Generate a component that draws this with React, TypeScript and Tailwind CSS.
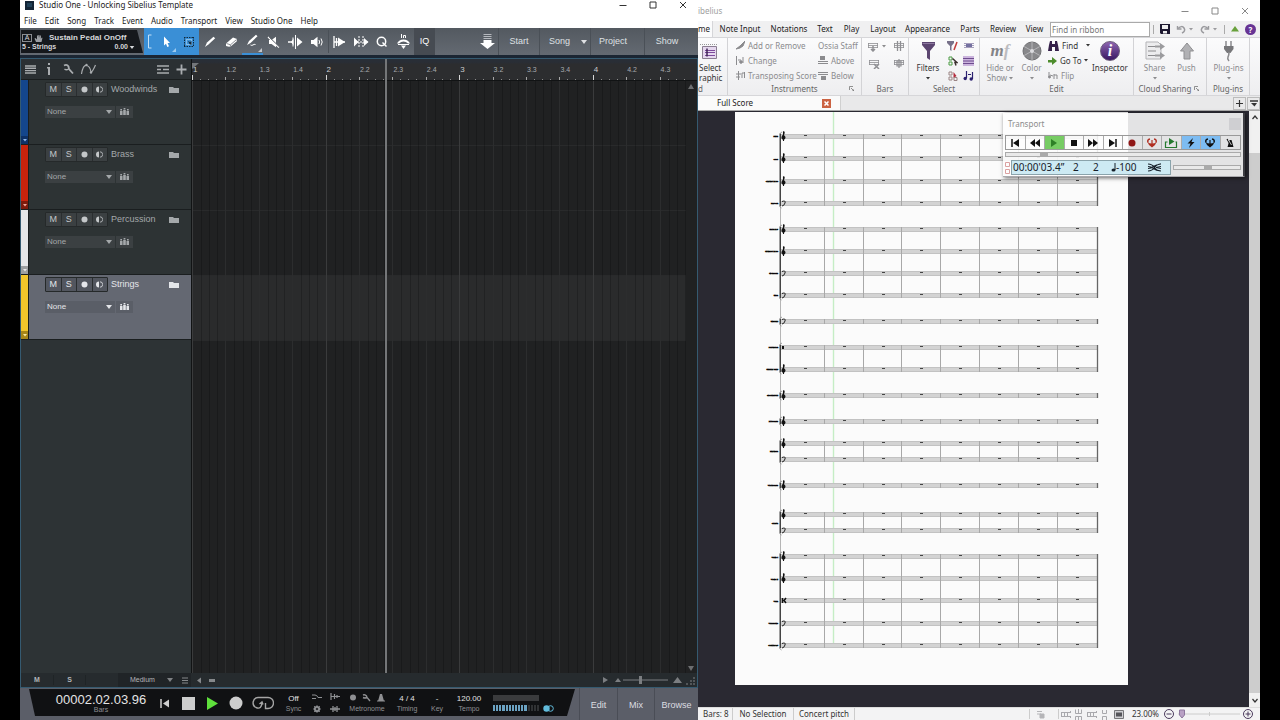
import React from "react";

type IcoProps = { w: number; h: number; className?: string; children: React.ReactNode };

function Ico({ w, h, className = "", children }: IcoProps) {
  return (
    <svg
      width={w}
      height={h}
      viewBox={`0 0 ${w} ${h}`}
      fill="none"
      stroke="currentColor"
      aria-hidden="true"
      className={`shrink-0 ${className}`}
    >
      {children}
    </svg>
  );
}

function Down({ className = "" }: { className?: string }) {
  return (
    <Ico w={6} h={4} className={className}>
      <path d="M0 0h6L3 4z" fill="currentColor" stroke="none" />
    </Ico>
  );
}

function TinyDown({ className = "" }: { className?: string }) {
  return (
    <Ico w={4} h={3} className={className}>
      <path d="M0 0h4L2 2.5z" fill="currentColor" stroke="none" />
    </Ico>
  );
}

function WindowButtons({ className = "" }: { className?: string }) {
  return (
    <div className={`flex items-center ${className}`}>
      <button aria-label="Minimize" className="flex h-3 w-[30px] items-center justify-center">
        <Ico w={8} h={8}><path d="M0.5 4.5h7" /></Ico>
      </button>
      <button aria-label="Maximize" className="flex h-3 w-[30px] items-center justify-center">
        <Ico w={8} h={8}><path d="M1 1h6v6H1z" /></Ico>
      </button>
      <button aria-label="Close" className="flex h-3 w-[30px] items-center justify-center">
        <Ico w={8} h={8}><path d="M1 1l6 6M7 1L1 7" /></Ico>
      </button>
    </div>
  );
}

/* ---------------------------------------------------------------- DAW --- */

const dawMenu = ["File", "Edit", "Song", "Track", "Event", "Audio", "Transport", "View", "Studio One", "Help"];

function Tool({ label, className = "", children }: { label: string; className?: string; children: React.ReactNode }) {
  return (
    <button aria-label={label} className={`relative flex h-full shrink-0 items-center justify-center ${className}`}>
      {children}
    </button>
  );
}

function DawToolbar() {
  return (
    <div className="flex h-[27px] shrink-0 bg-linear-to-b from-[#535960] to-[#646a72] text-white">
      <div className="relative w-[124px] shrink-0">
        <svg viewBox="0 0 124 27" preserveAspectRatio="none" className="absolute inset-0 h-full w-full" aria-hidden="true">
          <path d="M1 2h116l6 23H1z" fill="#15181c" />
        </svg>
        <div className="relative flex h-full flex-col justify-center pt-[2px] pr-[8px] pl-[2px] font-bold text-[#d5d7da]">
          <div className="flex h-[10px] items-center text-[9px]">
            <span className="flex h-[8px] w-[10px] items-center justify-center border border-[#8a8d92] text-[7px] font-normal">A</span>
            <Ico w={9} h={9} className="ml-[2px] text-[#9c9fa4]">
              <path d="M2 8L0.5 4.5l1-.4L3 5.5V1.5h1V4l.4-3h1v3l.5-2.500h1V5l.6-1.200h1L7.500 8z" fill="currentColor" stroke="none" />
            </Ico>
            <span className="ml-[6px] whitespace-nowrap text-[8px]">Sustain Pedal OnOff</span>
          </div>
          <div className="flex h-[9px] items-center justify-between pr-[1px] text-[7px]">
            <span>5 - Strings</span>
            <span className="flex items-center gap-[1px]">0.00 <Down className="h-[3px] w-[6px]" /></span>
          </div>
        </div>
      </div>
      <div className="flex h-[27px] shrink-0 bg-[#3a8fd6]">
        <Tool label="Bracket" className="w-[12px]"><Ico w={4} h={15}><path d="M3.500 1H.5v13h3" stroke="#c7e2f6" /></Ico></Tool>
        <Tool label="Arrow tool" className="w-[22px]">
          <Ico w={8} h={12}><path d="M1 0.500v9l2-1.800 1.300 3.300 1.700-.7-1.400-3.200H7z" fill="white" stroke="none" /></Ico>
          <svg className="absolute right-[2px] bottom-[3px]" width="4" height="4" aria-hidden="true"><path d="M4 0v4H0z" fill="#9ccbf0" /></svg>
        </Tool>
        <Tool label="Range tool" className="w-[21px]">
          <Ico w={12} h={12}>
            <path d="M1 1.500h10M1 10.500h10M1.500 1v10M10.500 1v10" stroke="#10283c" strokeDasharray="1.500 1" />
            <path d="M3.500 3.500h5v5h-5z" stroke="#cfe6f8" strokeDasharray="1 1" />
            <path d="M5 5l2 1 1.500-1v4l-2-1z" fill="#10283c" stroke="none" />
          </Ico>
        </Tool>
      </div>
      <Tool label="Split tool" className="w-[21px]"><Ico w={12} h={12}><path d="M1 11l2-4.500L9.500.8l1.700 1.500-6.500 6z" fill="white" stroke="none" /></Ico></Tool>
      <Tool label="Eraser" className="w-[22px]">
        <Ico w={13} h={12}><path d="M1 7.500L8 1.500l4 1.500-.5 2.500-6.500 5.500-4-1z" fill="white" stroke="none" /><path d="M1.500 7.500l4 1.300 6-5.300M5.500 8.800L5 11" stroke="#6b7077" strokeWidth=".8" /></Ico>
      </Tool>
      <Tool label="Paint tool" className="w-[21px] border-b-2 border-[#3a8fd6]">
        <Ico w={13} h={13}><path d="M1 11l2-4L10 .8l1.500 1.400L4.500 9z" fill="white" stroke="none" /><path d="M4.500 11c2 1.500 3-1.500 5-.5" /></Ico>
        <svg className="absolute right-[1px] bottom-[1px]" width="4" height="4" aria-hidden="true"><path d="M4 0v4H0z" fill="#c3c6ca" /></svg>
      </Tool>
      <Tool label="Mute tool" className="w-[21px]">
        <Ico w={13} h={12}><path d="M2 4h2.500L9 .8v10.500L4.500 8H2z" fill="white" stroke="none" /><path d="M1 1l11 10.500" strokeWidth="1.300" /><path d="M2.300 1.200l10 9.500" stroke="#5d636b" /></Ico>
      </Tool>
      <Tool label="Bend tool" className="w-[22px]">
        <Ico w={15} h={14}><path d="M7.500 0v14" /><path d="M0 7h4" strokeWidth="1.500" /><path d="M3 7l2.500-3.500v7zM9 2.500L14.500 7 9 11.500z" fill="white" stroke="none" /><path d="M5 2.500v9" /></Ico>
      </Tool>
      <Tool label="Listen tool" className="w-[22px]">
        <Ico w={14} h={12}><path d="M1 4h2.500L7.500.8v10.500L3.500 8H1z" fill="white" stroke="none" /><path d="M9 4q1.200 2 0 4M11 2.500q2.400 3.500 0 7" /></Ico>
      </Tool>
      <div className="my-[2px] w-px bg-[#4a5057]" />
      <Tool label="Transient" className="w-[21px]"><Ico w={13} h={14}><path d="M1 1v12M3.500 3v8M1 7h11" strokeWidth="1.300" /><path d="M5 2.500L12 7l-7 4.500z" fill="white" stroke="none" /></Ico></Tool>
      <Tool label="Slip" className="w-[21px]"><Ico w={16} h={14}><path d="M6 1v12M10 1v12M1 7h14" strokeDasharray="2 1" /><path d="M1 2.500L5.500 7 1 11.500zM11 3l4.500 4L11 11z" fill="white" stroke="none" /></Ico></Tool>
      <Tool label="Quantize" className="w-[21px]"><Ico w={12} h={12}><circle cx="5.500" cy="5.500" r="4.200" strokeWidth="1.500" /><path d="M6.500 6.500l4 4" strokeWidth="1.500" /></Ico></Tool>
      <Tool label="Input quantize" className="w-[22px]"><Ico w={15} h={15}><path d="M5.500 0v4M7.500 4V1.500h2V4" /><path d="M1 9.500q2-4 6.500-4t6.500 4H12Q10 7.500 7.500 7.500T3 9.500z" fill="white" stroke="none" /><path d="M2 10.500h11" /><path d="M5 11.500h5L7.500 15z" fill="white" stroke="none" /></Ico></Tool>
      <Tool label="IQ" className="w-[21px] bg-[#464b52] text-[9px]">IQ</Tool>
      <div className="ml-auto flex text-[9px] text-[#dfe1e4]">
        <Tool label="Install" className="w-[22px]">
          <Ico w={15} h={15}><path d="M3.500 .5h8M3.500 2.500h8M3.500 4.500h8" stroke="#b6b9be" /><path d="M3.500 6h8v3H15l-7.500 6L0 9h3.500z" fill="white" stroke="none" /></Ico>
        </Tool>
        <button className="w-[41px] border-l border-[#4a5057]">Start</button>
        <button className="flex w-[51px] items-center justify-between border-l border-[#4a5057] pr-[3px] pl-[9px]">Song <Down className="h-[4px] w-[6px]" /></button>
        <button className="w-[54px] border-l border-[#4a5057] pr-[9px]">Project</button>
        <button className="w-[54px] border-l border-[#4a5057] pr-[9px]">Show</button>
      </div>
    </div>
  );
}

type Track = { name: string; strip: string; foot: string; selected?: boolean };
const tracks: Track[] = [
  { name: "Woodwinds", strip: "bg-[#14468c]", foot: "bg-[#0e3167] text-[#8fb6ea]" },
  { name: "Brass", strip: "bg-[#c8230c]", foot: "bg-[#7d1a0c] text-[#f0a79b]" },
  { name: "Percussion", strip: "bg-[#e6e7e8]", foot: "bg-[#9d9fa0] text-[#e9e9e9]" },
  { name: "Strings", strip: "bg-[#f2c52a]", foot: "bg-[#a88618] text-[#f9e9a0]", selected: true },
];

function TrackRow({ track }: { track: Track }) {
  const tone = track.selected ? "bg-[#646872] text-[#e4e6ea]" : "bg-[#2d3334] text-[#a4a8aa]";
  const box = track.selected ? "bg-[#5a5e67]" : "bg-[#3b4042]";
  const keys = track.selected ? "bg-[#52565f] text-[#e4e6ea]" : "bg-[#3b4042] text-[#c4c7c9]";
  return (
    <div className={`flex h-[65px] border-b border-[#1a1e1f] ${tone}`}>
      <div className={`flex w-[8px] flex-col justify-end border-r border-[#1a1e1f] ${track.strip}`}>
        <button aria-label={`Expand ${track.name}`} className={`flex h-[8px] items-center justify-center ${track.foot}`}><TinyDown /></button>
      </div>
      <div className="flex-1 pt-[2px] pr-[12px] pl-[16px]">
        <div className="flex items-center">
          <div className={`flex h-[15px] w-[63px] divide-x divide-[#2a2e30] rounded-[1px] border border-[#25292a] text-[9px] ${keys}`}>
            <button aria-label="Mute" className="flex-1 leading-[13px]">M</button>
            <button aria-label="Solo" className="flex-1 leading-[13px]">S</button>
            <button aria-label="Record" className="flex flex-1 items-center justify-center"><Ico w={7} h={7}><circle cx="3.500" cy="3.500" r="3" fill="currentColor" stroke="none" /></Ico></button>
            <button aria-label="Monitor" className="flex flex-1 items-center justify-center"><Ico w={7} h={7}><path d="M3 .5a3 3 0 0 0 0 6z" fill="currentColor" stroke="none" /><path d="M4 .8a2.700 2.700 0 0 1 0 5.400" strokeWidth=".8" /></Ico></button>
          </div>
          <span className="ml-[3px] flex-1 text-[9px] leading-[15px]">{track.name}</span>
          <Ico w={10} h={8}><path d="M0 1h4l1 1h5v5H0z" fill="currentColor" stroke="none" /></Ico>
        </div>
        <div className="mt-[9px] flex gap-[1px]">
          <label className={`relative flex h-[12px] w-[70px] ${box}`}>
            <select aria-label={`${track.name} preset`} className="block h-[12px] w-full appearance-none bg-transparent pl-[2px] text-[8px] leading-[12px] outline-none">
              <option>None</option>
            </select>
            <Down className="pointer-events-none absolute top-[4px] right-[3px]" />
          </label>
          <button aria-label="Group" className={`flex h-[12px] w-[17px] items-center justify-center ${box}`}>
            <Ico w={9} h={8}><path d="M0 3h2.500v4H0zM3.200 2h2.600v5H3.200zM6.500 3H9v4H6.500zM.3 1h1.700v1.400H.3zM3.600 0h1.800v1.400H3.600zM7 1h1.700v1.400H7z" fill="currentColor" stroke="none" /></Ico>
          </button>
        </div>
      </div>
    </div>
  );
}

const beats = ["1", "1.2", "1.3", "1.4", "2", "2.2", "2.3", "2.4", "3", "3.2", "3.3", "3.4", "4", "4.2", "4.3"];

function Ruler() {
  return (
    <div className="grid h-[22px] shrink-0 grid-cols-15 border-b border-[#111314] bg-linear-to-b from-[#292e36] from-15% to-[#2c2d2f] to-25% pr-[4px]">
      {beats.map((b, i) => (
        <div key={b} className="relative flex min-w-0 flex-col justify-end">
          {i === 0 && <svg className="absolute top-[4px] left-0" width="7" height="6" aria-hidden="true"><path d="M0 0h7L0 6z" fill="#73767a" /></svg>}
          <span className={`relative pl-[1px] leading-[11px] ${i % 4 === 0 ? "text-[8px] text-[#c9cbce]" : "text-[7px] text-[#a7aaae]"}`}>{b}</span>
          <div className="flex h-[5px] items-end">
            <i className={`w-px ${i % 4 === 0 ? "h-[5px] bg-[#d6d6d6]" : "h-[3px] bg-[#a7a7a7]"}`} />
            <i className="ml-[7px] h-px w-px bg-[#8b8b8b]" />
            <i className="ml-[7px] h-px w-px bg-[#8b8b8b]" />
            <i className="ml-[7px] h-px w-px bg-[#8b8b8b]" />
          </div>
        </div>
      ))}
    </div>
  );
}

function Arrange() {
  return (
    <div className="relative min-h-0 flex-1 overflow-hidden bg-[#202122]">
      <div className="mr-[11px]">
        {tracks.map((t) => (
          <div key={t.name} className={`h-[65px] border-b border-[#292a2b] ${t.selected ? "bg-[#2a2b2c]" : ""}`} />
        ))}
      </div>
      <div className="absolute inset-0 grid grid-cols-15 pr-[4px]">
        {beats.map((b, i) => (
          <div key={b} className={`grid grid-cols-4 border-l ${i % 4 === 0 ? "border-[#3a3b3c]" : "border-[#2c2d2e]"}`}>
            <i />
            <i className="border-l border-black/20" />
            <i className="border-l border-black/20" />
            <i className="border-l border-black/20" />
          </div>
        ))}
      </div>
      <Ico w={6} h={5} className="absolute top-[3px] right-[3px] text-[#6c6e70]"><path d="M0 5h6L3 0z" fill="currentColor" stroke="none" /></Ico>
      <Ico w={6} h={5} className="absolute right-[3px] bottom-[2px] text-[#6c6e70]"><path d="M0 0h6L3 5z" fill="currentColor" stroke="none" /></Ico>
    </div>
  );
}

function DawMain() {
  return (
    <div className="flex min-h-0 flex-1 flex-col border border-[#355a70] bg-[#26292c]">
      <div className="flex min-h-0 flex-1">
        <div className="flex w-[170px] shrink-0 flex-col bg-[#2d3335]">
          <div className="flex h-[21px] shrink-0 items-center border-b border-[#1a1e1f] bg-[#2b3033] px-[4px] text-[#a9acaf]">
            <Ico w={11} h={9}><path d="M0 1h11M0 3.300h11M0 5.600h11M0 8h11" strokeWidth="1.400" /></Ico>
            <Ico w={5} h={12} className="ml-[10px]"><path d="M2 0h2v2H2zM1 4h3v8H2V5.500H1z" fill="currentColor" stroke="none" /></Ico>
            <Ico w={11} h={11} className="ml-[12px]"><path d="M1 1.500q3-1.500 4.500 1L6 5l4 4.500" strokeWidth="1.800" /><path d="M1.500 5q2 1.500 4 0" strokeWidth="1.500" /></Ico>
            <Ico w={16} h={12} className="ml-[7px]"><path d="M.5 11Q2 2 5.500 2.500T10 9q1.500 0 4.500-7" strokeWidth="1.200" /><circle cx="5.500" cy="2" r="1.200" fill="currentColor" stroke="none" /><circle cx="10" cy="9.500" r="1.200" fill="currentColor" stroke="none" /></Ico>
            <Ico w={12} h={9} className="ml-auto"><path d="M0 1h12M0 8h12M0 4.500h4M6 4.500h6" strokeWidth="1.600" /></Ico>
            <Ico w={11} h={11} className="ml-[7px]"><path d="M5.500 0.500v10M.5 5.500h10" strokeWidth="1.800" /></Ico>
          </div>
          {tracks.map((t) => <TrackRow key={t.name} track={t} />)}
        </div>
        <div className="relative flex min-w-0 flex-1 flex-col border-l border-[#111314]">
          <Ruler />
          <Arrange />
          <div className="absolute inset-y-0 left-[38%] ml-[1px] w-[2px] bg-[#747678]" />
        </div>
      </div>
      <div className="flex h-[14px] shrink-0 items-center bg-[#262b2e] text-[7px] text-[#b2b5b8]">
        <button className="w-[32px] font-bold">M</button>
        <button className="w-[33px] border-x border-[#1f2426] font-bold">S</button>
        <div className="w-[32px]" />
        <div className="flex h-full w-[73px] items-center justify-between bg-[#202427] pr-[18px] pl-[12px]">
          <span>Medium</span><Down className="ml-[8px] text-[#7f8285]" />
        </div>
        <Ico w={35} h={7} className="-ml-[9px] text-[#85888b]"><path d="M0 1h6M0 3.500h6M0 6h6" /><path d="M19 .5v6l-4-3z" fill="currentColor" stroke="none" /><path d="M27 2h6v3h-6z" fill="currentColor" stroke="none" /></Ico>
        <div className="ml-auto flex items-center gap-[4px] pr-[2px] text-[#7b7e81]">
          <Ico w={5} h={6}><path d="M0 0l5 3-5 3z" fill="currentColor" stroke="none" /></Ico>
          <Ico w={70} h={10}><path d="M3 7h6L6 3zM61 8h9L65.500 2z" fill="currentColor" stroke="none" /><path d="M11 5h45" /><path d="M28.500 1v8" strokeWidth="3" /></Ico>
          <Ico w={9} h={9}><path d="M0 8h2M4 8h2M4 5h2M7 8h2M7 5h2M7 2h2" strokeWidth="1.500" opacity=".7" /></Ico>
        </div>
      </div>
    </div>
  );
}

function Readout({ value, label, className }: { value: string; label: string; className: string }) {
  return (
    <div className={`flex shrink-0 flex-col items-center ${className}`}>
      <span className="text-[8px] leading-[11px] text-[#e2e2e2]">{value}</span>
      <span className="text-[7px] leading-[9px] text-[#8e8f92]">{label}</span>
    </div>
  );
}

function DawTransport() {
  return (
    <div className="flex h-[32px] shrink-0 bg-[#5b5e68] text-[#cfcfcf]">
      <div className="relative mb-[4px] flex min-w-0 flex-1">
        <svg viewBox="0 0 558 28" preserveAspectRatio="none" className="absolute inset-0 h-full w-full" aria-hidden="true">
          <path d="M9 1h545l-8 27H15z" fill="#101113" />
        </svg>
        <div className="relative flex flex-1 items-center pt-[2px] pl-[31px]">
          <div className="flex w-[100px] shrink-0 flex-col items-center">
            <span className="text-[13px] leading-[13px] text-[#e4e4e4]">00002.02.03.96</span>
            <span className="text-[7px] leading-[8px] text-[#8e8f92]">Bars</span>
          </div>
          <button aria-label="Return to zero" className="flex w-[26px] justify-center"><Ico w={9} h={9}><path d="M1 0v9" strokeWidth="1.500" /><path d="M9 .5v8l-6-4z" fill="currentColor" stroke="none" /></Ico></button>
          <button aria-label="Stop" className="flex w-[23px] justify-center"><Ico w={13} h={13}><path d="M0 0h13v13H0z" fill="#cdcdcd" stroke="none" /></Ico></button>
          <button aria-label="Play" className="flex w-[25px] justify-center"><Ico w={11} h={13}><path d="M0 0l11 6.500L0 13z" fill="#5fe03c" stroke="none" /></Ico></button>
          <button aria-label="Record" className="flex w-[21px] justify-center"><Ico w={14} h={14}><circle cx="7" cy="7" r="6.500" fill="#cdcdcd" stroke="none" /></Ico></button>
          <button aria-label="Loop" className="flex w-[34px] justify-center"><Ico w={22} h={14}><path d="M4 11.500A5.300 5.300 0 0 1 6 1.500h10a5.300 5.300 0 0 1 0 11h-2.500V7M4 11.500q5.500 2.500 6-5M7.500 8L10 6l1 2.500" stroke="#a5a5a5" strokeWidth="1.400" /></Ico></button>
          <Readout value="Off" label="Sync" className="w-[27px]" />
          <div className="flex shrink-0 flex-col items-start gap-[5px] pl-[5px] text-[#8f9194]">
            <Ico w={30} h={7}><path d="M0 2h3q2 0 3 2.500h4M0 5.500h4" /><path d="M19 0v7M19 3.500h9M22.500 1v5M25 2v3" strokeWidth="1.200" /></Ico>
            <Ico w={30} h={8}><circle cx="5" cy="4" r="2.200" strokeWidth="1.800" /><path d="M5 0v8M1 4h8M2 1l6 6M8 1L2 7" strokeWidth=".8" /><circle cx="5" cy="4" r="1" fill="#101113" stroke="none" /><path d="M18 4h10M21 1v6M25 1v6M23 2v4" strokeWidth="1.300" /></Ico>
          </div>
          <div className="ml-[4px] flex w-[42px] shrink-0 flex-col items-center text-[#8e8f92]">
            <Ico w={36} h={9} className="mb-[2px]"><circle cx="4" cy="4.500" r="3" fill="currentColor" stroke="none" /><path d="M14 2q2-1 3.500 1l.5 1.500L21 8M14 4.500q2 1 4 0" strokeWidth="1.400" /><path d="M29 8l2-7h2l2 7z" fill="currentColor" stroke="none" /><path d="M28 8h8" /></Ico>
            <span className="text-[7px] leading-[9px]">Metronome</span>
          </div>
          <Readout value="4 / 4" label="Timing" className="w-[38px]" />
          <Readout value="-" label="Key" className="w-[22px]" />
          <Readout value="120.00" label="Tempo" className="w-[42px]" />
          <div className="ml-[3px] flex w-[46px] shrink-0 flex-col gap-[4px]">
            <i className="h-[6px] bg-[#3a3b3d]" />
            <div className="flex h-[6px] gap-[1px]">
              {Array.from({ length: 15 }, (_, i) => <i key={i} className={`flex-1 ${i < 11 ? "bg-[#6ba3c4]" : "bg-[#303234]"}`} />)}
            </div>
          </div>
          <Ico w={11} h={7} className="mt-[10px] ml-[4px]"><circle cx="3.500" cy="3.500" r="3.200" fill="#62bcdc" stroke="none" /><circle cx="7.500" cy="3.500" r="2.800" stroke="#62bcdc" /></Ico>
        </div>
      </div>
      <div className="flex text-[9px] text-[#dcdde1]">
        <button className="w-[38px] border-l border-[#4a4d56] pt-[4px]">Edit</button>
        <button className="w-[37px] border-l border-[#4a4d56] pt-[4px]">Mix</button>
        <button className="w-[44px] border-l border-[#4a4d56] pt-[4px]">Browse</button>
      </div>
    </div>
  );
}

function StudioWindow() {
  return (
    <section className="z-10 flex min-w-0 shrink-0 grow-[678] basis-0 flex-col overflow-hidden bg-[#1c2632] font-['Liberation_Sans',Arial,sans-serif]">
      <div className="flex h-[28px] shrink-0 flex-col bg-white font-['Noto_Sans','Segoe_UI',sans-serif] text-[#222]">
        <div className="flex h-[10px] items-center pl-[5px] text-[8px] leading-[10px]">
          <Ico w={9} h={9}><path d="M0 0h9v9H0z" fill="#132536" stroke="none" /><path d="M2 3h5M2 5h5" stroke="#315f7a" /></Ico>
          <span className="ml-[5px]">Studio One - Unlocking Sibelius Template</span>
          <WindowButtons className="ml-auto text-[#333]" />
        </div>
        <nav className="flex flex-1 items-center gap-[8px] pt-[4px] pl-[4px] text-[8px] leading-[10px]">
          {dawMenu.map((m) => <button key={m}>{m}</button>)}
        </nav>
      </div>
      <DawToolbar />
      <div className="h-[3px] shrink-0 bg-[#1b2633]" />
      <DawMain />
      <DawTransport />
    </section>
  );
}

/* ----------------------------------------------------------- Notation --- */

const ribbonTabs = [
  { t: "Note Input", w: "w-[54px]" }, { t: "Notations", w: "w-[44px]" }, { t: "Text", w: "w-[28px]" },
  { t: "Play", w: "w-[25px]" }, { t: "Layout", w: "w-[38px]" }, { t: "Appearance", w: "w-[51px]" },
  { t: "Parts", w: "w-[34px]" }, { t: "Review", w: "w-[32px]" }, { t: "View", w: "w-[31px]" },
];

function Group({ title, className, launcher, labelClass = "", children }: { title: string; className: string; launcher?: boolean; labelClass?: string; children: React.ReactNode }) {
  return (
    <div className={`flex shrink-0 flex-col border-r border-[#d3d3d6] ${className}`}>
      <div className="flex h-[46px]">{children}</div>
      <div className={`relative flex h-[12px] items-center justify-center leading-[12px] text-[#666] ${labelClass}`}>
        {title}
        {launcher && <Ico w={5} h={5} className="absolute top-[3px] right-[7px] text-[#777]"><path d="M.5 4V.5H4M2 2l3 3M5 3v2H3" strokeWidth=".8" /></Ico>}
      </div>
    </div>
  );
}

function SmallButton({ children, className = "" }: { children: React.ReactNode; className?: string }) {
  return <button className={`flex h-[15px] items-center gap-[3px] whitespace-nowrap leading-[15px] ${className}`}>{children}</button>;
}

function BigButton({ icon, lines, className = "", arrow }: { icon: React.ReactNode; lines: string[]; className?: string; arrow?: boolean }) {
  return (
    <button className={`flex shrink-0 flex-col items-center pt-px whitespace-nowrap ${className}`}>
      <span className="flex h-[24px] items-center justify-center">{icon}</span>
      {lines.map((l, i) => <span key={l} className="flex h-[10px] items-center gap-[2px] leading-[10px]">{l}{arrow && lines.length > 1 && i === 1 && <TinyDown />}</span>)}
      {arrow && lines.length === 1 && <TinyDown className="mt-[4px]" />}
    </button>
  );
}

function BarIcon({ kind }: { kind: number }) {
  return (
    <Ico w={11} h={11} className="text-[#8f8f93]">
      <path d="M0 2.500h10M0 4.500h10M0 6.500h10M.5 2v5M9.500 2v5" strokeWidth=".8" />
      {kind === 0 && <path d="M5 5v5M3 8l2 2 2-2" strokeWidth="1.500" />}
      {kind === 1 && <path d="M3.500 0v10M6.500 0v10" strokeWidth="1.300" />}
      {kind === 2 && <path d="M5 6l5 5M10 6l-5 5" strokeWidth="1.500" />}
      {kind === 3 && <path d="M5 1v9M3 3h4v5H3z" strokeWidth="1.200" />}
    </Ico>
  );
}

function Ribbon() {
  return (
    <div className="flex h-[59px] shrink-0 border-y border-[#d6d6d9] bg-linear-to-b from-[#fbfbfc] to-[#eeeef0] text-[#8b8b8e]">
      <div className="flex w-[30px] shrink-0 flex-col border-r border-[#d3d3d6] text-[#333]">
        <button className="flex h-[46px] flex-col items-start pt-px pl-px whitespace-nowrap">
          <span className="flex h-[24px] items-center pl-px"><Ico w={18} h={17}><path d="M0 1.500h18" stroke="#999" strokeDasharray="1 1" /><path d="M2.500 3.500h14v12h-14z" fill="#e6d8ef" stroke="#8b7e92" /><path d="M5 7.500h10M5 9.500h10M5 12.500h10" stroke="#7d4a9c" /><path d="M7 5.500v8" stroke="#3e2455" strokeWidth="1.500" /></Ico></span>
          <span className="h-[10px] leading-[10px]">Select</span>
          <span className="h-[10px] leading-[10px]">raphic</span>
        </button>
        <span className="h-[12px] leading-[12px] text-[#666]">d</span>
      </div>
      <Group title="Instruments" className="w-[134px]" launcher>
        <div className="flex w-[90px] flex-col pl-[8px]">
          <SmallButton><Ico w={9} h={9}><path d="M0 8l4-3 5-5-2 5-3 2z" fill="currentColor" /></Ico>Add or Remove</SmallButton>
          <SmallButton><Ico w={9} h={9}><path d="M.5 0v9M2 4h3M7 1v6" /><circle cx="5" cy="6" r="1.300" fill="currentColor" /></Ico>Change</SmallButton>
          <SmallButton><Ico w={9} h={9}><path d="M2.500 0v9M0 3h5M0 6h4M6 2v5M8.500 1v6M6 2h2.500" /></Ico>Transposing Score</SmallButton>
        </div>
        <div className="flex flex-col">
          <SmallButton>Ossia Staff</SmallButton>
          <SmallButton><Ico w={10} h={9}><path d="M0 7.500h10M0 5.500h10" /><path d="M2 0h5v4H2z" fill="currentColor" stroke="none" /></Ico>Above</SmallButton>
          <SmallButton><Ico w={10} h={9}><path d="M0 1.500h10M0 3.500h10" /><path d="M3 5h5v4H3z" fill="currentColor" stroke="none" /></Ico>Below</SmallButton>
        </div>
      </Group>
      <Group title="Bars" className="w-[47px]">
        <div className="grid h-[34px] grid-cols-2 place-items-center gap-x-[6px] pl-[7px]">
          <span className="flex items-center gap-[3px]"><BarIcon kind={0} /><TinyDown /></span><BarIcon kind={1} />
          <span className="justify-self-start"><BarIcon kind={2} /></span><BarIcon kind={3} />
        </div>
      </Group>
      <Group title="Select" className="w-[71px]">
        <BigButton className="w-[38px] text-[#333]" lines={["Filters"]} arrow icon={<Ico w={15} h={20}><path d="M1 1h13v3L9 10v9l-3-2v-7L1 4z" fill="#5b4570" stroke="none" /><path d="M1.500 2.500h12" stroke="#8d79a0" /></Ico>} />
        <div className="grid grid-cols-2 place-items-center gap-x-[5px]">
          <Ico w={11} h={10}><path d="M0 0h7v2L4.500 5v5L3 9V5L0 2z" fill="#77718a" stroke="none" /><path d="M10 1L7 9" stroke="#c33d3d" strokeWidth="1.500" /></Ico>
          <Ico w={10} h={9}><path d="M0 2.500h10M0 4.500h10M0 6.500h10" stroke="#a7a0bd" /><path d="M2 3h6v3H2z" fill="#7470a0" stroke="none" /></Ico>
          <Ico w={10} h={10}><path d="M1 1h3v3H1zM1 6h3v3H1z" stroke="#4b9b42" /><path d="M4.500 2.500L9 6.500H7L8 9.500" stroke="#3b3030" strokeWidth="1.500" /></Ico>
          <Ico w={11} h={10}><path d="M0 0h11v10H0z" fill="#cbb4dd" stroke="none" /><path d="M0 2.500h11M0 5h11M0 7.500h11" stroke="#6d4b8e" /></Ico>
          <Ico w={10} h={10}><path d="M1 1h3v3H1zM1 6h3v3H1z" stroke="#9b8585" /><path d="M5.500 1v6l3-2z" fill="#b32b3c" stroke="none" /><path d="M6 6.500h3v3H6z" stroke="#9b8585" /></Ico>
          <Ico w={11} h={10}><path d="M3.500 0v7M9.500 1v7M5 3.500h3" stroke="#2b2170" strokeWidth="1.200" /><circle cx="2.200" cy="7.500" r="1.700" fill="#2b2170" stroke="none" /><circle cx="8.200" cy="8" r="1.700" fill="#2b2170" stroke="none" /></Ico>
        </div>
      </Group>
      <Group title="Edit" className="w-[154px]">
        <BigButton className="w-[40px]" lines={["Hide or", "Show"]} arrow icon={<span className="font-['Liberation_Serif',serif] text-[17px] leading-[20px] font-bold text-[#848488] italic">m<span className="text-[#bcbcc0]">f</span></span>} />
        <BigButton className="w-[23px]" lines={["Color"]} arrow icon={<Ico w={20} h={20}><circle cx="10" cy="10" r="9" fill="#88888b" stroke="#707073" /><path d="M10 1v18M2.200 5.500l15.600 9M17.800 5.500l-15.600 9" stroke="#b5b5b8" /><circle cx="10" cy="10" r="2" fill="#dcdcdf" stroke="none" /></Ico>} />
        <div className="flex w-[47px] shrink-0 flex-col pl-[5px] text-[#333]">
          <SmallButton><Ico w={11} h={10}><path d="M1 4l1-4h2v3h3V0h2l1 4 1 6H7V6H4v4H0z" fill="#35204a" stroke="none" /></Ico><span className="flex-1 text-left">Find</span><TinyDown className="ml-[4px]" /></SmallButton>
          <SmallButton><Ico w={9} h={8}><path d="M0 3h4V0l5 4-5 4V5.500H0z" fill="#4d8c2c" stroke="none" /></Ico>Go To<TinyDown /></SmallButton>
          <SmallButton className="text-[#8b8b8e]"><Ico w={10} h={9}><path d="M1 1v5M6 3v5M9 4v4M2 4l3 1M6 4h3" /><circle cx="1.500" cy="6" r="1" fill="currentColor" /></Ico>Flip</SmallButton>
        </div>
        <BigButton className="w-[40px] text-[#333]" lines={["Inspector"]} icon={
          <span className="flex h-[20px] w-[20px] items-center justify-center rounded-full border border-[#6c5d7b] bg-linear-to-b from-[#8e65b0] to-[#3b1763] font-['Liberation_Serif',serif] text-[16px] leading-[18px] font-bold text-white italic">i</span>
        } />
      </Group>
      <Group title="Cloud Sharing" className="w-[73px]" labelClass="pr-[10px]" launcher>
        <BigButton className="w-[41px]" lines={["Share"]} arrow icon={<Ico w={20} h={20}><path d="M1 1h12l3 3v14H1z" fill="#ececee" stroke="#b3b3b6" /><path d="M3 5.500h8M3 10h8M3 14.500h8" strokeWidth="1.200" /><path d="M10 4.500h5V2l5 3.500L15 9V6.500h-5zM10 13.500h5V11l5 3.500L15 18v-2.500h-5z" fill="#9b9b9e" stroke="none" /></Ico>} />
        <BigButton className="w-[23px]" lines={["Push"]} icon={<Ico w={16} h={18}><path d="M8 1l6.500 8H11v8H5V9H1.500z" fill="#b1b1b4" stroke="#8f8f92" /></Ico>} />
      </Group>
      <Group title="Plug-ins" className="w-[43px]">
        <BigButton className="w-[43px]" lines={["Plug-ins"]} arrow icon={<Ico w={12} h={21}><path d="M3 0v5M8 0v5" strokeWidth="1.500" /><path d="M1 5h9.500v3L7.500 12H4L1 8z" fill="#77777a" stroke="none" /><path d="M6 11q0 3-1 5t1 4" strokeWidth="1.600" /></Ico>} />
      </Group>
    </div>
  );
}

type Staff = { y: number; clef: "t" | "b" | "p" | "a" };
type Section = { staves: Staff[]; names: { y: number; n: string }[] };
const sections: Section[] = [
  { staves: [{ y: 24, clef: "t" }, { y: 46, clef: "t" }, { y: 69, clef: "t" }, { y: 91, clef: "b" }], names: [{ y: 24, n: "Flute" }, { y: 47, n: "Oboe" }, { y: 69, n: "Clarinet in Bb" }, { y: 91, n: "Bassoon" }] },
  { staves: [{ y: 117, clef: "t" }, { y: 139, clef: "t" }, { y: 161, clef: "b" }, { y: 183, clef: "b" }], names: [{ y: 117, n: "Horn in F" }, { y: 139, n: "Trumpet in Bb" }, { y: 161, n: "Trombone" }, { y: 183, n: "Tuba" }] },
  { staves: [{ y: 209, clef: "b" }], names: [{ y: 209, n: "Timpani" }] },
  { staves: [{ y: 235, clef: "p" }, { y: 257, clef: "t" }], names: [{ y: 235, n: "Percussion" }, { y: 257, n: "Tubular Bells" }] },
  { staves: [{ y: 283, clef: "t" }], names: [{ y: 283, n: "Glockenspiel" }] },
  { staves: [{ y: 309, clef: "t" }], names: [{ y: 309, n: "Xylophone" }] },
  { staves: [{ y: 331, clef: "t" }, { y: 347, clef: "b" }], names: [{ y: 339, n: "Marimba" }] },
  { staves: [{ y: 373, clef: "t" }], names: [{ y: 373, n: "Vibraphone" }] },
  { staves: [{ y: 402, clef: "t" }, { y: 418, clef: "b" }], names: [{ y: 411, n: "Celesta" }] },
  { staves: [{ y: 444, clef: "t" }, { y: 466, clef: "t" }, { y: 488, clef: "a" }, { y: 511, clef: "b" }, { y: 533, clef: "b" }], names: [{ y: 445, n: "Violin I" }, { y: 467, n: "Violin II" }, { y: 489, n: "Viola" }, { y: 511, n: "Violoncello" }, { y: 533, n: "Contrabass" }] },
];
const barXs = [89, 128, 166, 205, 244, 283, 322];

function Clef({ kind, y }: { kind: Staff["clef"]; y: number }) {
  if (kind === "t") return <path d={`M48.500 ${y - 4.5}v9.500M48.500 ${y - 1}q-3 3 0 4.500q3-2 0-4M48.500 ${y - 4.5}q1.500 1-.5 4`} stroke="#111" strokeWidth="1.100" fill="#111" />;
  if (kind === "b") return <path d={`M47 ${y - 1.5}q4-1.500 3 1.500t-3 3`} stroke="#222" strokeWidth="1" fill="none" />;
  if (kind === "a") return <path d={`M47.500 ${y - 2}v5M51 ${y - 2}l-2 2.500 2 2.500`} stroke="#111" strokeWidth="1.500" fill="none" />;
  return <rect x="47" y={y - 1} width="2" height="3" fill="#111" />;
}

function ScorePage() {
  return (
    <svg width="393" height="573" viewBox="0 0 393 573" className="block shrink-0 bg-[#fbfbfb]" role="img" aria-label="Full score">
      <path d="M45.500 21V536" stroke="#b5b5b5" />
      <path d="M98.500 0V536" stroke="#c5edc5" strokeWidth="1.400" />
      {sections.map((s) => {
        const top = s.staves[0].y - 2;
        const end = s.staves[s.staves.length - 1].y + 3;
        return (
          <g key={top}>
            {s.staves.map((st) => (
              <g key={st.y}>
                <rect x="46" y={st.y - 2} width="317" height="5" fill="#d3d3d3" />
                <path d={`M46 ${st.y - 1.5}h317M46 ${st.y + 2.5}h317`} stroke="#c2c2c2" />
                <Clef kind={st.clef} y={st.y} />
                {[70, 109, 148, 186, 225, 264, 303, 342].map((x) => <rect key={x} x={x - 1} y={st.y - 1} width="3" height="1" fill="#444" />)}
              </g>
            ))}
            <path d={`M45.500 ${top}V${end}`} stroke="#444" />
            <path d={`M47 ${top - 2}q-2 1-2.500 2V${end}q.5 1.200 2 2`} stroke="#777" strokeWidth=".7" fill="none" />
            {barXs.map((x) => <path key={x} d={`M${x + 0.5} ${top}V${end}`} stroke="#a8a8a8" />)}
            <path d={`M362.500 ${top}V${end}`} stroke="#666" strokeWidth="1.300" />
            {s.names.map((n) => <text key={n.n} x="43" y={n.y + 1} textAnchor="end" strokeWidth=".5" className="fill-black stroke-black font-['Liberation_Serif',serif] text-[2px] font-bold">{n.n}</text>)}
          </g>
        );
      })}
    </svg>
  );
}

const horns = (
  <>
    <path d="M3 1Q0 1.500 1 4.500M7 1q3 .5 2 3.500" strokeWidth="1.500" />
    <path d="M.5 4q2 1.500 4.500 1.500T9.500 4L8 7 5 9.500 2 7z" fill="currentColor" stroke="none" />
    <path d="M5 2v4" strokeWidth="1.200" />
  </>
);

const transportButtons: { label: string; tone: string; icon: React.ReactNode }[] = [
  { label: "Start", tone: "", icon: <><path d="M2 1v8" strokeWidth="1.500" /><path d="M9 1v8L3 5z" fill="currentColor" stroke="none" /></> },
  { label: "Rewind", tone: "", icon: <path d="M5 1v8L0 5zM10 1v8L5 5z" fill="currentColor" stroke="none" /> },
  { label: "Play", tone: "bg-[#77cc64] text-[#2e7f26]", icon: <path d="M2 1l6 4-6 4z" fill="currentColor" stroke="none" /> },
  { label: "Stop", tone: "", icon: <path d="M2 2h6v6H2z" fill="currentColor" stroke="none" /> },
  { label: "Fast forward", tone: "", icon: <path d="M0 1v8l5-4zM5 1v8l5-4z" fill="currentColor" stroke="none" /> },
  { label: "End", tone: "", icon: <><path d="M8 1v8" strokeWidth="1.500" /><path d="M1 1v8l6-4z" fill="currentColor" stroke="none" /></> },
  { label: "Record", tone: "text-[#8f1717]", icon: <circle cx="5" cy="5" r="3.500" fill="currentColor" stroke="none" /> },
  { label: "Live tempo record", tone: "text-[#b02f22]", icon: horns },
  { label: "Loop", tone: "text-[#257a2e]", icon: <><path d="M1.500 4H-.5v5.500h11V4h-1" strokeWidth="1.200" /><path d="M3 0l5.500 3.500L3 7z" fill="currentColor" stroke="none" /></> },
  { label: "Live playback", tone: "bg-[#7dbcf2]", icon: <path d="M7 0L1.500 5.500h3L3 10l5.500-6H5.500z" fill="currentColor" stroke="none" /> },
  { label: "Live tempo", tone: "bg-[#7dbcf2]", icon: horns },
  { label: "Click", tone: "", icon: <><path d="M4.500 2h2l2 7H2.500z" fill="currentColor" stroke="none" /><path d="M2 1l3.500 6" strokeWidth="1.200" /><path d="M3.500 2l3 5" stroke="#eee" strokeWidth=".8" /></> },
];

function TransportPanel() {
  return (
    <div className="w-[242px] border-r-2 border-b border-r-[#3c3c42] border-b-[#a9a9ad] bg-[#fdfdfd]/88 pr-[2px] pb-px pl-[2px] font-['Noto_Sans','Segoe_UI',sans-serif] text-[8px] shadow-[1px_1px_4px_rgba(0,0,0,0.6)]">
      <div className="flex h-[22px] items-center justify-between pl-[3px] leading-[12px] text-[#8b8b8b]">
        Transport
        <button aria-label="Close transport" className="h-[12px] w-[12px] bg-[#cfcfd2]" />
      </div>
      <div className="grid h-[15px] grid-cols-12 divide-x divide-[#aaa] border border-[#999] text-[#111]">
        {transportButtons.map((b) => (
          <button key={b.label} aria-label={b.label} className={`flex items-center justify-center ${b.tone}`}><Ico w={10} h={10} className="overflow-visible">{b.icon}</Ico></button>
        ))}
      </div>
      <div className="mt-[2px] h-[5px] border border-[#aaa] bg-[#e9e9e9] pl-[34px]"><i className="block h-full w-[8px] bg-[#aaa]" /></div>
      <div className="mt-[3px] flex items-center gap-[1px]">
        <Ico w={5} h={14}><path d="M.5 1.500h4v4h-4zM.5 8.500h4v4h-4z" stroke="#dba0a0" /></Ico>
        <div className="flex h-[15px] w-[160px] items-center border border-[#8aa3ab] bg-[#cdeaf3] pl-[1px] font-['Noto_Sans',sans-serif] text-[10px] leading-[13px] text-[#16202a]">
          <span className="w-[60px]">00:00'03.4”</span>
          <span className="w-[20px]">2</span>
          <span className="w-[18px]">2</span>
          <span className="flex w-[37px] items-center">
            <Ico w={5} h={9}><path d="M4 0v7" /><ellipse cx="2.500" cy="7" rx="2" ry="1.500" fill="currentColor" stroke="none" /></Ico>-100
          </span>
          <Ico w={13} h={9}><path d="M0 1q4 0 6.500 3.500T13 8M0 3.500q3 0 5.500 2T13 8M0 8q4 0 6.500-3.500T13 1M0 5.500q3 0 5.500-2T13 1M8 4.500l5-1M8 4.500l5 1" strokeWidth="1.200" /></Ico>
        </div>
        <div className="ml-[1px] h-[5px] flex-1 border border-[#aaa] bg-[#e9e9e9] pl-[30px]"><i className="block h-full w-[8px] bg-[#aaa]" /></div>
      </div>
    </div>
  );
}

function ViewIcons() {
  return (
    <Ico w={66} h={11} className="text-[#a9a9ad]">
      <path d="M1 3.500h9M1 7.500h9M1.500 3v5M4.500 3v5M7.500 3v5M10.500 2v2M10.500 7v2" />
      <path d="M15.500 .5v4h6v-4M15.500 11V7.500h6V11M18.500 0v4M18.500 8v3" />
      <path d="M27 3.500h9M27 7.500h9M27.500 3v5M30.500 3v5M33.500 3v5M36.500 2v2M36.500 7v2" />
      <path d="M42.500 1v3.500h4V1M42.500 11V7.500h4V11" />
      <path d="M54.500 1.500h9v8h-9z" fill="#d0d0d3" stroke="#77777a" /><path d="M56 3.500h6v4h-6z" fill="#55555a" stroke="none" />
    </Ico>
  );
}

function SibeliusWindow() {
  return (
    <section className="flex min-w-0 flex-1 flex-col overflow-hidden bg-[#f0f0f1] font-['Noto_Sans','Segoe_UI',sans-serif] text-[8px] text-[#333]">
      <div className="flex h-[21px] shrink-0 items-center justify-between bg-white text-[#a0a0a0]">
        <span>ibelius</span>
        <WindowButtons className="text-[#888]" />
      </div>
      <div className="flex h-[16px] shrink-0 items-center text-[#222]">
        <button className="h-full w-[15px] border-r border-[#d6d6d9] bg-[#fbfbfc] text-left">me</button>
        {ribbonTabs.map((t) => <button key={t.t} className={`shrink-0 whitespace-nowrap ${t.w}`}>{t.t}</button>)}
        <input aria-label="Find in ribbon" placeholder="Find in ribbon" className="h-[15px] w-[100px] border border-[#aaa] bg-white px-[1px] placeholder:text-[#777]" />
        <div className="flex flex-1 items-center justify-between pr-[4px] pl-[3px] text-[#9a9a9e]">
          <span className="h-[9px] w-px bg-[#aaa]" />
          <Ico w={10} h={10}><path d="M0 0h10v10H1L0 9z" fill="#1d1830" stroke="none" /><path d="M2 1h6v4H2zM3 7h4v2.500H3z" fill="#eee" stroke="none" /></Ico>
          <Ico w={18} h={10}><path d="M1.500 2v3h4" strokeWidth="1.400" /><path d="M2 4.500Q6 1 8 4t-2 5" strokeWidth="1.500" /><path d="M13 4h4l-2 2.500z" fill="currentColor" stroke="none" /></Ico>
          <Ico w={18} h={10}><path d="M8.500 2v3h-4" strokeWidth="1.400" /><path d="M8 4.500Q4 1 2 4t2 5" strokeWidth="1.500" /><path d="M13 4h4l-2 2.500z" fill="currentColor" stroke="none" /></Ico>
          <span className="h-[9px] w-px bg-[#aaa]" />
          <Ico w={8} h={6}><path d="M0 5.500h8L4 0z" fill="#68a03c" stroke="none" /></Ico>
          <button aria-label="Help" className="flex h-[11px] w-[11px] items-center justify-center rounded-full bg-[#673494] text-[8px] leading-[11px] font-bold text-white">?</button>
        </div>
      </div>
      <Ribbon />
      <div className="flex h-[15px] shrink-0 items-center border-b border-[#aaa] bg-[#e9e9ea]">
        <div className="flex h-full w-[143px] items-center justify-between border-r border-[#d0d0d0] bg-[#fafafa] pr-[9px] pl-[19px] text-[#222]">
          Full Score
          <button aria-label="Close tab" className="flex h-[9px] w-[9px] items-center justify-center bg-[#cb6242] text-white"><Ico w={5} h={5}><path d="M.5.5l4 4M4.500.5l-4 4" strokeWidth="1.500" /></Ico></button>
        </div>
        <button aria-label="New tab" className="ml-auto flex h-[13px] w-[13px] items-center justify-center border border-[#bbb]"><Ico w={7} h={7}><path d="M3.500 0v7M0 3.500h7" strokeWidth="1.200" /></Ico></button>
        <button aria-label="Tab list" className="ml-[1px] flex h-[13px] w-[13px] items-center justify-center border border-[#bbb]"><Ico w={8} h={7}><path d="M0 1h8" strokeWidth="1.500" /><path d="M1 3h6L4.500 6.500z" fill="currentColor" stroke="none" /></Ico></button>
      </div>
      <div className="flex min-h-0 flex-1">
        <div className="min-w-0 flex-1 overflow-hidden bg-[#2a2932] pt-[1px] pl-[37px]">
          <ScorePage />
        </div>
        <div className="flex w-[11px] shrink-0 flex-col items-center justify-between bg-[#f0f0f0] py-[4px] text-[#333]">
          <Ico w={6} h={5}><path d="M.5 4L3 1l2.500 3" strokeWidth="1.200" /></Ico>
          <div className="mt-[33px] mb-[5px] w-full flex-1 bg-[#cdcdcd]" />
          <Ico w={6} h={5}><path d="M.5 1L3 4l2.500-3" strokeWidth="1.200" /></Ico>
        </div>
      </div>
      <div className="flex h-[13px] shrink-0 items-center border-t border-[#ddd] bg-[#f3f3f4] leading-[12px]">
        <span className="w-[35px] border-r border-[#ccc] pl-[5px] whitespace-nowrap">Bars: 8</span>
        <span className="w-[61px] border-r border-[#ccc] text-center whitespace-nowrap">No Selection</span>
        <span className="w-[61px] border-r border-[#ccc] text-center whitespace-nowrap">Concert pitch</span>
        <div className="ml-auto flex items-center pr-[7px]">
          <i className="mr-[6px] h-[10px] w-px bg-[#ccc]" />
          <Ico w={9} h={9} className="text-[#b5b5b8]"><path d="M1 1.500h5M1 4h4" /><path d="M4 4h4v4H4z" fill="currentColor" /></Ico>
          <i className="mr-[1px] ml-[13px] h-[10px] w-px bg-[#ccc]" />
          <ViewIcons />
          <span className="ml-[6px]">23.00%</span>
          <button aria-label="Zoom out" className="ml-[5px]"><Ico w={10} h={10}><circle cx="5" cy="5" r="4.500" stroke="#4a3a5c" /><path d="M2.500 5h5" stroke="#4a3a5c" /></Ico></button>
          <Ico w={69} h={10}><path d="M4 5h62" stroke="#ccc" /><path d="M35.500 3v4" stroke="#ccc" /><path d="M5.500 1h5v5L8 9 5.500 6z" fill="#b9a1c5" stroke="#8e779e" /></Ico>
          <button aria-label="Zoom in"><Ico w={10} h={10}><circle cx="5" cy="5" r="4.500" stroke="#4a3a5c" /><path d="M2.500 5h5M5 2.500v5" stroke="#4a3a5c" /></Ico></button>
        </div>
      </div>
    </section>
  );
}

export default function App() {
  return (
    <main className="flex h-screen min-h-[480px] overflow-hidden bg-black px-5">
      <StudioWindow />
      <div className="relative flex min-w-0 grow-[562] basis-0">
        <SibeliusWindow />
        <div className="absolute top-[113px] right-[15px]"><TransportPanel /></div>
      </div>
    </main>
  );
}
